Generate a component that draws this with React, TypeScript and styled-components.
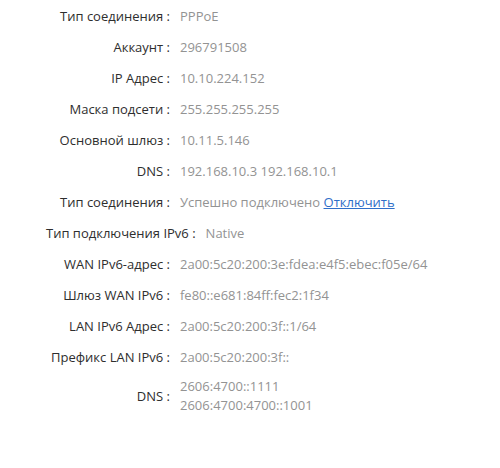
import React from "react";
import styled, { createGlobalStyle } from "styled-components";

const Global = createGlobalStyle`
  html, body { margin: 0; padding: 0; background: #ffffff; }
  body { font-family: "Open Sans", "Noto Sans", sans-serif; }
`;

const Panel = styled.div`
  width: 500px;
  height: 468px;
  box-sizing: border-box;
  padding: 1px 0 0 46px;
  display: flex;
  flex-direction: column;
  font-size: 13px;
  line-height: 19px;
`;

const Row = styled.div<{ $pad?: number }>`
  display: flex;
  align-items: center;
  padding: ${(p) => p.$pad ?? 6}px 0;
`;

const Label = styled.div`
  min-width: 124px;
  text-align: right;
  white-space: nowrap;
  color: #2e2e2e;
`;

const Value = styled.div`
  margin-left: 10px;
  color: #939393;
  white-space: nowrap;
`;

const Link = styled.a`
  color: #2f6fc9;
  text-decoration: underline;
  cursor: pointer;
`;

type Item = { label: string; value: React.ReactNode; pad?: number };

const items: Item[] = [
  { label: "Тип соединения", value: "PPPoE" },
  { label: "Аккаунт", value: "296791508" },
  { label: "IP Адрес", value: "10.10.224.152" },
  { label: "Маска подсети", value: "255.255.255.255" },
  { label: "Основной шлюз", value: "10.11.5.146" },
  { label: "DNS", value: "192.168.10.3 192.168.10.1" },
  {
    label: "Тип соединения",
    value: (
      <>
        Успешно подключено <Link>Отключить</Link>
      </>
    ),
  },
  { label: "Тип подключения IPv6", value: "Native" },
  { label: "WAN IPv6-адрес", value: "2a00:5c20:200:3e:fdea:e4f5:ebec:f05e/64" },
  { label: "Шлюз WAN IPv6", value: "fe80::e681:84ff:fec2:1f34" },
  { label: "LAN IPv6 Адрес", value: "2a00:5c20:200:3f::1/64" },
  { label: "Префикс LAN IPv6", value: "2a00:5c20:200:3f::" },
  {
    label: "DNS",
    value: (
      <>
        2606:4700::1111
        <br />
        2606:4700:4700::1001
      </>
    ),
    pad: 4,
  },
];

export default function App() {
  return (
    <>
      <Global />
      <Panel>
        {items.map((it, i) => (
          <Row key={i} $pad={it.pad}>
            <Label>{it.label} :</Label>
            <Value>{it.value}</Value>
          </Row>
        ))}
      </Panel>
    </>
  );
}
